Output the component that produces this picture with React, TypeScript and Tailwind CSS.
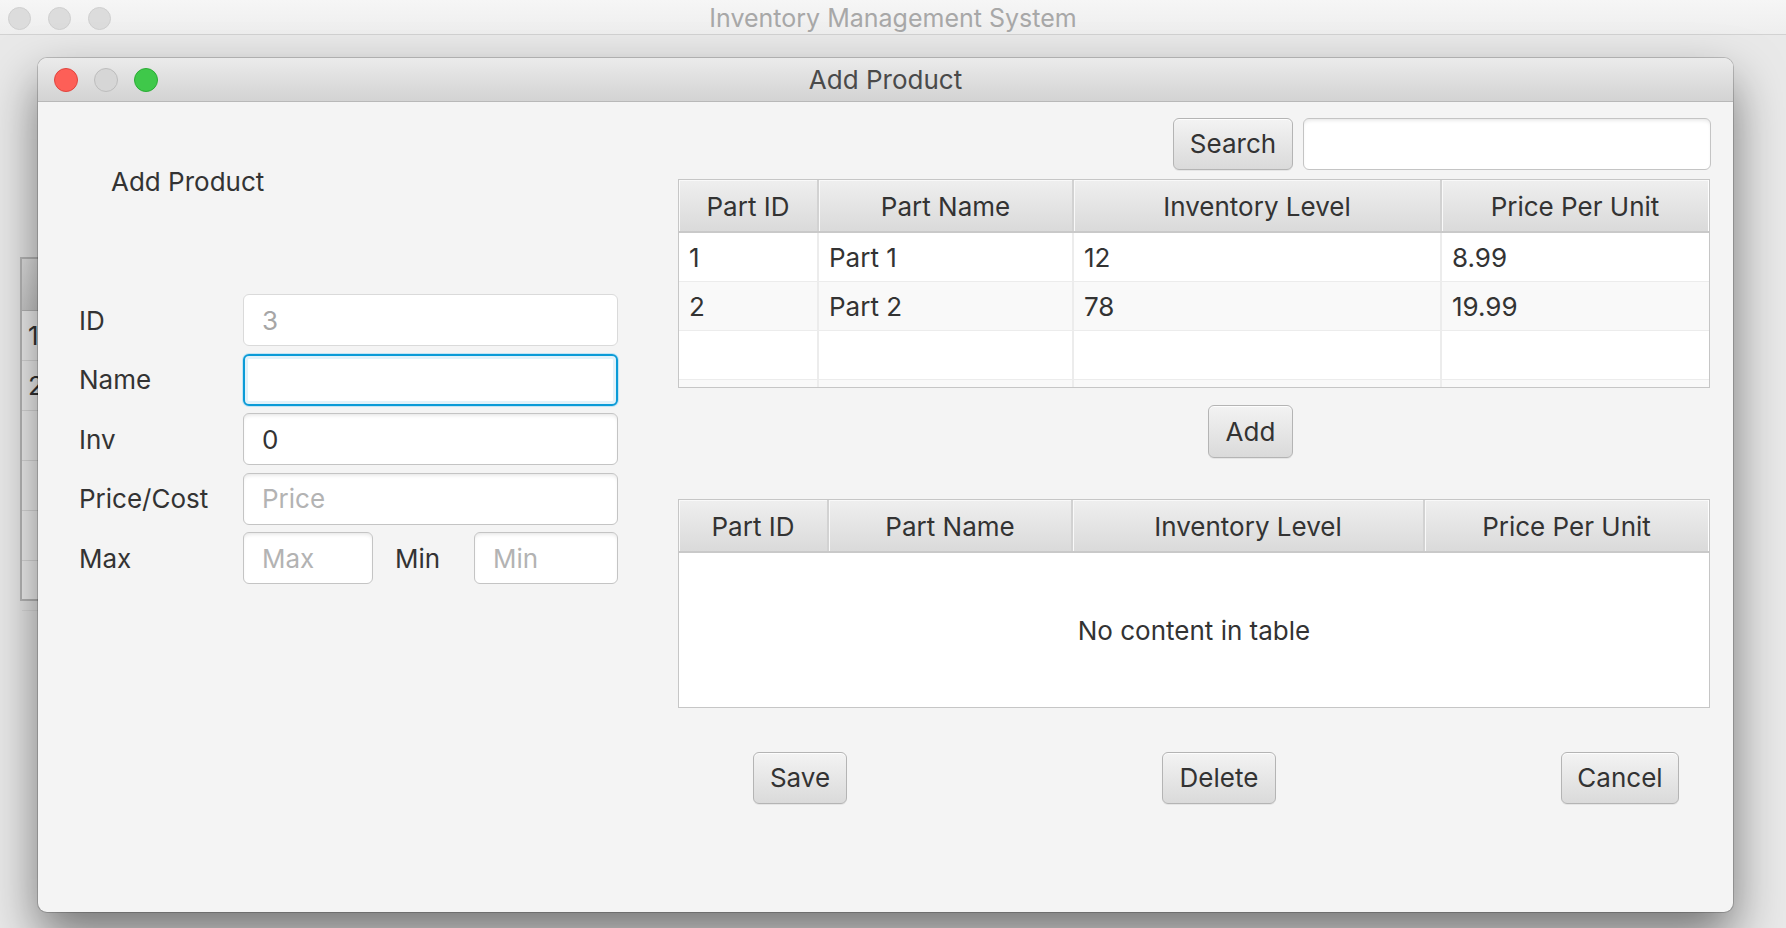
import React from 'react';

const headers = ['Part ID', 'Part Name', 'Inventory Level', 'Price Per Unit'];

const parts = [
  ['1', 'Part 1', '12', '8.99'],
  ['2', 'Part 2', '78', '19.99'],
  ['', '', '', ''],
  ['', '', '', ''],
];

const topCols = ['w-[140px]', 'w-[255px]', 'w-[368px]', 'w-[266px]'];
const bottomCols = ['w-[150px]', 'w-[244px]', 'w-[352px]', 'w-[283px]'];

function Button({ label, className = '' }: { label: string; className?: string }) {
  return (
    <button
      className={`h-[52px] shrink-0 rounded-[6px] border border-[#b4b4b4] bg-linear-to-b from-[#f3f3f3] to-[#dadada] text-[26px] leading-none text-[#333] shadow-[inset_0_1px_0_#fdfdfd,0_1px_0_rgba(0,0,0,0.06)] ${className}`}
    >
      {label}
    </button>
  );
}

function Light({ color }: { color: string }) {
  return <span className={`block h-[24px] w-[24px] rounded-full border ${color}`} />;
}

function Header({ cols }: { cols: string[] }) {
  return (
    <div className="flex h-[53px] border-b-2 border-[#c9c9c9]">
      {headers.map((h, i) => (
        <div
          key={h}
          className={`${cols[i]} flex shrink-0 items-center justify-center bg-linear-to-b from-[#efefef] to-[#dadada] pt-[2px] text-[26px] text-[#333] shadow-[inset_1px_1px_0_#f9f9f9] ${i < 3 ? 'border-r-2 border-[#d2d2d2]' : ''}`}
        >
          {h}
        </div>
      ))}
    </div>
  );
}

function PartsTable() {
  return (
    <div className="mt-[9px] border border-[#c6c6c6] bg-white">
      <Header cols={topCols} />
      <div className="h-[154px] overflow-hidden">
        {parts.map((row, r) => (
          <div
            key={r}
            className={`flex h-[49px] border-b border-[#ececec] ${r % 2 === 1 ? 'bg-[#f9f9f9]' : 'bg-white'}`}
          >
            {row.map((cell, c) => (
              <div
                key={c}
                className={`${topCols[c]} flex shrink-0 items-center pl-[10px] text-[26px] text-[#333] ${c < 3 ? 'border-r-2 border-[#ececec]' : ''}`}
              >
                {cell}
              </div>
            ))}
          </div>
        ))}
      </div>
    </div>
  );
}

function ProductPartsTable() {
  return (
    <div className="mt-[41px] border border-[#c6c6c6] bg-white">
      <Header cols={bottomCols} />
      <div className="flex h-[154px] items-center justify-center text-[26px] text-[#333]">
        No content in table
      </div>
    </div>
  );
}

const inputBase =
  'h-[52px] rounded-[6px] bg-white pl-[18px] text-[26px] text-[#333] outline-none placeholder:text-[#b3b3b3]';
const inputNormal = `${inputBase} border border-[#c4c4c4] shadow-[inset_0_3px_4px_-2px_rgba(0,0,0,0.12)]`;

export default function App() {
  return (
    <div className="relative h-[928px] w-[1786px] overflow-hidden bg-[#e9e9e9] font-['Inter','Noto_Sans',sans-serif]">
      {/* main window title bar */}
      <div className="grid h-[35px] grid-cols-[1fr_auto_1fr] items-center border-b border-[#d2d2d2] bg-linear-to-b from-[#f6f6f6] to-[#eeeeee]">
        <div className="flex gap-[17px] pb-[6px] pl-[8px]">
          <span className="block h-[23px] w-[23px] rounded-full border border-[#cfcfcf] bg-[#dcdcdc]" />
          <span className="block h-[23px] w-[23px] rounded-full border border-[#cfcfcf] bg-[#dcdcdc]" />
          <span className="block h-[23px] w-[23px] rounded-full border border-[#cfcfcf] bg-[#dcdcdc]" />
        </div>
        <div className="pb-[6px] text-[25px] text-[#a8a8a8]">Inventory Management System</div>
        <div />
      </div>

      {/* main window content, mostly behind the dialog */}
      <div className="pl-[20px] pt-[222px]">
        <div className="h-[344px] w-[700px] border-2 border-[#b9b9b9] bg-[#f4f4f4]">
          <div className="h-[52px] border-b border-[#b9b9b9] bg-linear-to-b from-[#e4e4e4] to-[#cfcfcf]" />
          {['1', '2', '', '', '', ''].map((v, i) => (
            <div key={i} className="flex h-[50px] items-center border-b border-[#dcdcdc] pl-[6px] text-[26px] text-[#333]">
              {v}
            </div>
          ))}
        </div>
      </div>

      {/* Add Product dialog */}
      <div className="absolute left-[38px] top-[58px] flex h-[854px] w-[1695px] flex-col rounded-[9px] bg-[#f4f4f4] shadow-[0_0_0_1px_rgba(0,0,0,0.18),0_24px_50px_rgba(0,0,0,0.5)]">
        <div className="relative flex h-[44px] shrink-0 items-center rounded-t-[9px] border-b border-[#b8b8b8] bg-linear-to-b from-[#ebebeb] to-[#d3d3d3]">
          <div className="flex gap-[16px] pl-[16px]">
            <Light color="border-[#e0443e] bg-[#fd5f57]" />
            <Light color="border-[#bdbdbd] bg-[#d6d6d6]" />
            <Light color="border-[#2aac35] bg-[#3fc84a]" />
          </div>
          <div className="absolute inset-x-0 text-center text-[26px] text-[#4a4a4a]">Add Product</div>
        </div>

        <div className="flex flex-1">
          {/* left: product form */}
          <div className="w-[640px] shrink-0 pl-[41px] pt-[64px]">
            <div className="ml-[32px] text-[26px] leading-[32px] text-[#333]">Add Product</div>
            <div className="mt-[96px] grid grid-cols-[164px_375px] items-center gap-y-[7.5px] text-[26px] text-[#333]">
              <span>ID</span>
              <input
                readOnly
                value="3"
                className={`${inputBase} border border-[#dadada] bg-[#f7f7f7] text-[#a6a6a6]`}
              />
              <span>Name</span>
              <input
                readOnly
                className={`${inputBase} border-2 border-[#0b9bd7] pl-[17px] shadow-[0_0_0_1px_#c3e5f5,inset_0_0_0_3px_#e2f2fa]`}
              />
              <span>Inv</span>
              <input readOnly value="0" className={inputNormal} />
              <span>Price/Cost</span>
              <input readOnly placeholder="Price" className={inputNormal} />
              <span>Max</span>
              <div className="flex items-center">
                <input readOnly placeholder="Max" className={`${inputNormal} w-[130px]`} />
                <span className="ml-[22px] w-[79px]">Min</span>
                <input readOnly placeholder="Min" className={`${inputNormal} w-[144px]`} />
              </div>
            </div>
          </div>

          {/* right: parts tables and actions */}
          <div className="flex w-[1032px] shrink-0 flex-col pt-[16px]">
            <div className="flex justify-end gap-[10px] pl-[495px]">
              <Button label="Search" className="w-[120px]" />
              <input readOnly className={`${inputNormal} w-[408px] -mr-[1px]`} />
            </div>
            <PartsTable />
            <div className="mt-[17px] flex">
              <Button label="Add" className="ml-[530px] h-[53px] w-[85px]" />
            </div>
            <ProductPartsTable />
            <div className="mt-[44px] flex">
              <Button label="Save" className="ml-[75px] w-[94px]" />
              <Button label="Delete" className="ml-[315px] w-[114px]" />
              <Button label="Cancel" className="ml-[285px] w-[118px]" />
            </div>
          </div>
        </div>
      </div>
    </div>
  );
}
